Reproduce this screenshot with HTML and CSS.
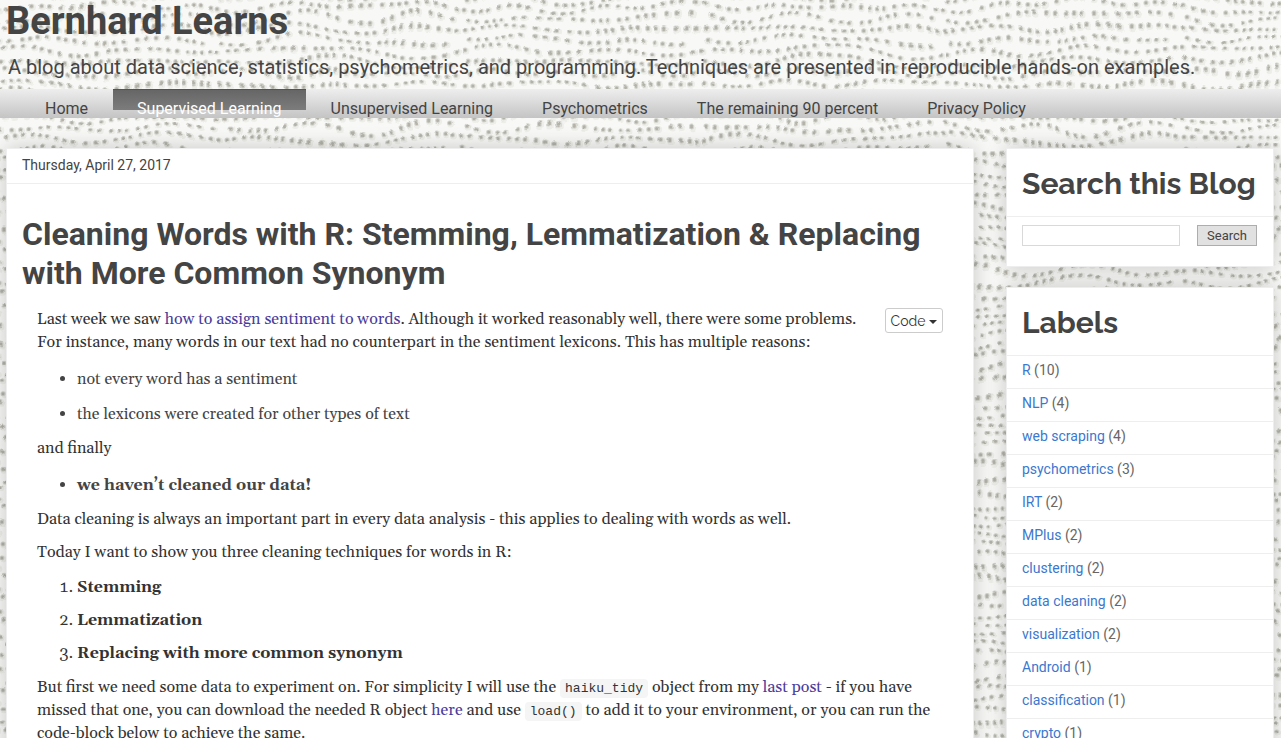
FILE: index.html
```html
<!DOCTYPE html>
<html lang="en">

<head>
    <meta charset="UTF-8">
    <meta name="viewport" content="width=device-width, initial-scale=1.0">
    <title>Bernhard Learns</title>
    <link rel="stylesheet" href="styles.css">
</head>

<body>
    <header>
        <h1 class="blog-title">Bernhard Learns</h1>
        <p class="description">A blog about data science, statistics, psychometrics, and programming. Techniques are presented in reproducible hands-on examples.</p>
    </header>

    <nav class="tabs">
        <a href="#">Home</a>
        <a href="#" class="selected">Supervised Learning</a>
        <a href="#">Unsupervised Learning</a>
        <a href="#">Psychometrics</a>
        <a href="#">The remaining 90 percent</a>
        <a href="#">Privacy Policy</a>
    </nav>

    <div class="columns">
        <main class="card">
            <h2 class="date">Thursday, April 27, 2017</h2>
            <article>
                <h3 class="post-title">Cleaning Words with R: Stemming, Lemmatization &amp; Replacing with More Common Synonym</h3>
                <div class="post-body">
                    <button type="button" class="code-button">Code <span class="caret"></span></button>
                    <p>Last week we saw <a href="#">how to assign sentiment to words</a>. Although it worked reasonably well, there were some problems. For instance, many words in our text had no counterpart in the sentiment lexicons. This has multiple reasons:</p>
                    <ul>
                        <li>not every word has a sentiment</li>
                        <li>the lexicons were created for other types of text</li>
                    </ul>
                    <p>and finally</p>
                    <ul>
                        <li><strong>we haven’t cleaned our data!</strong></li>
                    </ul>
                    <p>Data cleaning is always an important part in every data analysis - this applies to dealing with words as well.</p>
                    <p>Today I want to show you three cleaning techniques for words in R:</p>
                    <ol>
                        <li><strong>Stemming</strong></li>
                        <li><strong>Lemmatization</strong></li>
                        <li><strong>Replacing with more common synonym</strong></li>
                    </ol>
                    <p>But first we need some data to experiment on. For simplicity I will use the <code>haiku_tidy</code> object from my <a href="#">last post</a> - if you have missed that one, you can download the needed R object <a href="#">here</a> and use <code>load()</code> to add it to your environment, or you can run the code-block below to achieve the same.</p>
                </div>
            </article>
        </main>

        <aside>
            <section class="card">
                <h2 class="widget-title">Search this Blog</h2>
                <form class="search">
                    <input type="text" aria-label="Search this blog">
                    <button type="submit">Search</button>
                </form>
            </section>
            <section class="card">
                <h2 class="widget-title">Labels</h2>
                <ul class="labels">
                    <li><a href="#">R</a> (10)</li>
                    <li><a href="#">NLP</a> (4)</li>
                    <li><a href="#">web scraping</a> (4)</li>
                    <li><a href="#">psychometrics</a> (3)</li>
                    <li><a href="#">IRT</a> (2)</li>
                    <li><a href="#">MPlus</a> (2)</li>
                    <li><a href="#">clustering</a> (2)</li>
                    <li><a href="#">data cleaning</a> (2)</li>
                    <li><a href="#">visualization</a> (2)</li>
                    <li><a href="#">Android</a> (1)</li>
                    <li><a href="#">classification</a> (1)</li>
                    <li><a href="#">crypto</a> (1)</li>
                </ul>
            </section>
        </aside>
    </div>
</body>

</html>
```
FILE: styles.css
```css
* {
    box-sizing: border-box;
}

html {
    height: 100%;
    overflow: hidden;
}

body {
    height: 100%;
    overflow: hidden;
    margin: 0;
    font-family: Roboto, sans-serif;
    font-size: 14px;
    color: #444;
    background-color: #f8f8f6;
    /* pebbled leather: wavy rows of round dots, bent a little by low frequency noise */
    background-image: url("data:image/svg+xml,%3Csvg xmlns='http://www.w3.org/2000/svg' width='1400' height='800'%3E%3Cdefs%3E%3Cfilter id='f' x='0' y='0' width='1' height='1' color-interpolation-filters='sRGB'%3E%3CfeTurbulence type='fractalNoise' baseFrequency='.014 .02' numOctaves='1' seed='4' result='n'/%3E%3CfeDisplacementMap in='SourceGraphic' in2='n' scale='26' xChannelSelector='R' yChannelSelector='G'/%3E%3CfeGaussianBlur stdDeviation='.5'/%3E%3C/filter%3E%3Cg id='r' fill='none' stroke-linecap='round'%3E%3Cpath stroke-dasharray='0 9 0 8 0 12 0 9 0 10' d='M2 6Q30 1 60 6T120 6T180 6T237 6'/%3E%3Cpath stroke-dasharray='0 8 0 10 0 9 0 13 0 8' d='M6 17Q46 11 80 17T160 17T236 17'/%3E%3Cpath stroke-dasharray='0 10 0 9 0 8 0 12' d='M3 27Q22 31 40 27T80 27T120 27T160 27T200 27T236 27'/%3E%3Cpath stroke-dasharray='0 9 0 12 0 9 0 8 0 13' d='M8 38Q30 44 60 38T120 38T180 38T237 38'/%3E%3Cpath stroke-dasharray='0 8 0 11 0 9' d='M4 49Q46 44 80 49T160 49T236 49'/%3E%3Cpath stroke-dasharray='0 9 0 10 0 13 0 8' d='M7 60Q32 64 50 60T100 60T150 60T200 60T237 60'/%3E%3Cpath stroke-dasharray='0 12 0 8 0 9 0 10' d='M2 71Q30 66 60 71T120 71T180 71T236 71'/%3E%3Cpath stroke-dasharray='0 9 0 8 0 11 0 8 0 9' d='M5 82Q46 87 80 82T160 82T237 82'/%3E%3Cpath stroke-dasharray='0 10 0 9 0 8 0 13' d='M8 93Q22 89 40 93T80 93T120 93T160 93T200 93T236 93'/%3E%3Cpath stroke-dasharray='0 9 0 12 0 9 0 8' d='M3 104Q30 108 60 104T120 104T180 104T237 104'/%3E%3C/g%3E%3Cpattern id='q' width='240' height='110' patternUnits='userSpaceOnUse'%3E%3Cuse href='%23r' x='1' y='1' stroke='%23edede9' stroke-width='7'/%3E%3Cuse href='%23r' stroke='%23d4d4ce' stroke-width='5'/%3E%3Cuse href='%23r' stroke='%23b2b2a9' stroke-width='3'/%3E%3C/pattern%3E%3C/defs%3E%3Crect width='1400' height='800' fill='url(%23q)' filter='url(%23f)'/%3E%3C/svg%3E");
    background-position: -20px -20px;
}

a {
    color: #3b78cf;
    text-decoration: none;
}

header {
    height: 89px;
    padding: 0 8px 0 6px;
}

.blog-title {
    margin: 0;
    font-size: 38px;
    line-height: 42px;
}

.description {
    margin: 0 2px;
    padding-top: 12px;
    font-size: 20px;
    line-height: 26px;
}

.tabs {
    display: flex;
    gap: 1px;
    height: 29px;
    padding-left: 21px;
    overflow: hidden;
    background: linear-gradient(#eee, #c4c4c4);
}

.tabs a {
    height: 21px;
    padding: 0 24px;
    font-size: 16px;
    line-height: 40px;
    color: #444;
}

.tabs .selected {
    color: #fff;
    background: linear-gradient(#666, #7c7c7c);
    border-top: 1px solid #555;
    line-height: 38px;
}

.columns {
    display: grid;
    grid-template-columns: minmax(0, 1fr) 268px;
    gap: 32px;
    align-items: start;
    padding: 30px 7px 0 6px;
}

.card {
    min-width: 0;
    background: #fff;
    border: 1px solid #eee;
    box-shadow: 0 0 20px rgba(0, 0, 0, 0.2);
}

.date {
    margin: 0;
    padding: 0 15px 2px;
    font-size: 14px;
    font-weight: 400;
    line-height: 32px;
    border-bottom: 1px solid #eee;
}

article {
    padding: 31px 15px 30px;
}

.post-title {
    margin: 0;
    font-size: 32px;
    line-height: 39px;
}

.post-body {
    padding: 15px 15px 0;
    font-family: Georgia, Gelasio, "Liberation Serif", serif;
    font-size: 16px;
    line-height: 23px;
    color: #333;
}

.post-body p {
    margin: 0 0 10px;
}

.post-body a {
    color: #4a3c9c;
}

.post-body ul,
.post-body ol {
    margin: 14px 0 11px;
    padding-left: 40px;
}

.post-body ol {
    margin-top: 12px;
}

.post-body li + li {
    margin-top: 10px;
}

.post-body ul li {
    color: #444;
}

.post-body ul li + li {
    margin-top: 12px;
}

.code-button {
    float: right;
    height: 25px;
    margin-left: 20px;
    padding: 0 5px;
    font-family: Raleway, Lato, sans-serif;
    font-size: 14px;
    color: #333;
    background: #fff;
    border: 1px solid #ccc;
    border-radius: 3px;
}

.caret {
    display: inline-block;
    vertical-align: middle;
    border-top: 4px solid #333;
    border-left: 4px solid transparent;
    border-right: 4px solid transparent;
}

code {
    padding: 2px 5px;
    font-family: "Liberation Mono", monospace;
    font-size: 13px;
    line-height: 1;
    background: #f5f5f5;
    border-radius: 4px;
}

aside {
    display: grid;
    grid-template-columns: minmax(0, 1fr);
    gap: 20px;
}

.widget-title {
    margin: 0;
    padding: 16px 15px 14px;
    font-family: Raleway, Lato, sans-serif;
    font-size: 30px;
    line-height: 37px;
    white-space: nowrap;
    border-bottom: 1px solid #eee;
}

.search {
    display: flex;
    gap: 17px;
    padding: 8px 16px 20px 15px;
}

.search input {
    flex: 1;
    min-width: 0;
    height: 21px;
    border: 1px solid #d9d9d9;
}

.search button {
    width: 60px;
    height: 21px;
    padding: 0;
    font-family: Roboto, sans-serif;
    font-size: 13px;
    color: #444;
    background: #e1e1e1;
    border: 1px solid #adadad;
}

.labels {
    margin: 0;
    padding: 0;
    list-style: none;
    color: #666;
}

.labels li {
    height: 33px;
    padding: 0 15px;
    line-height: 28px;
    border-bottom: 1px solid #eee;
}
```
